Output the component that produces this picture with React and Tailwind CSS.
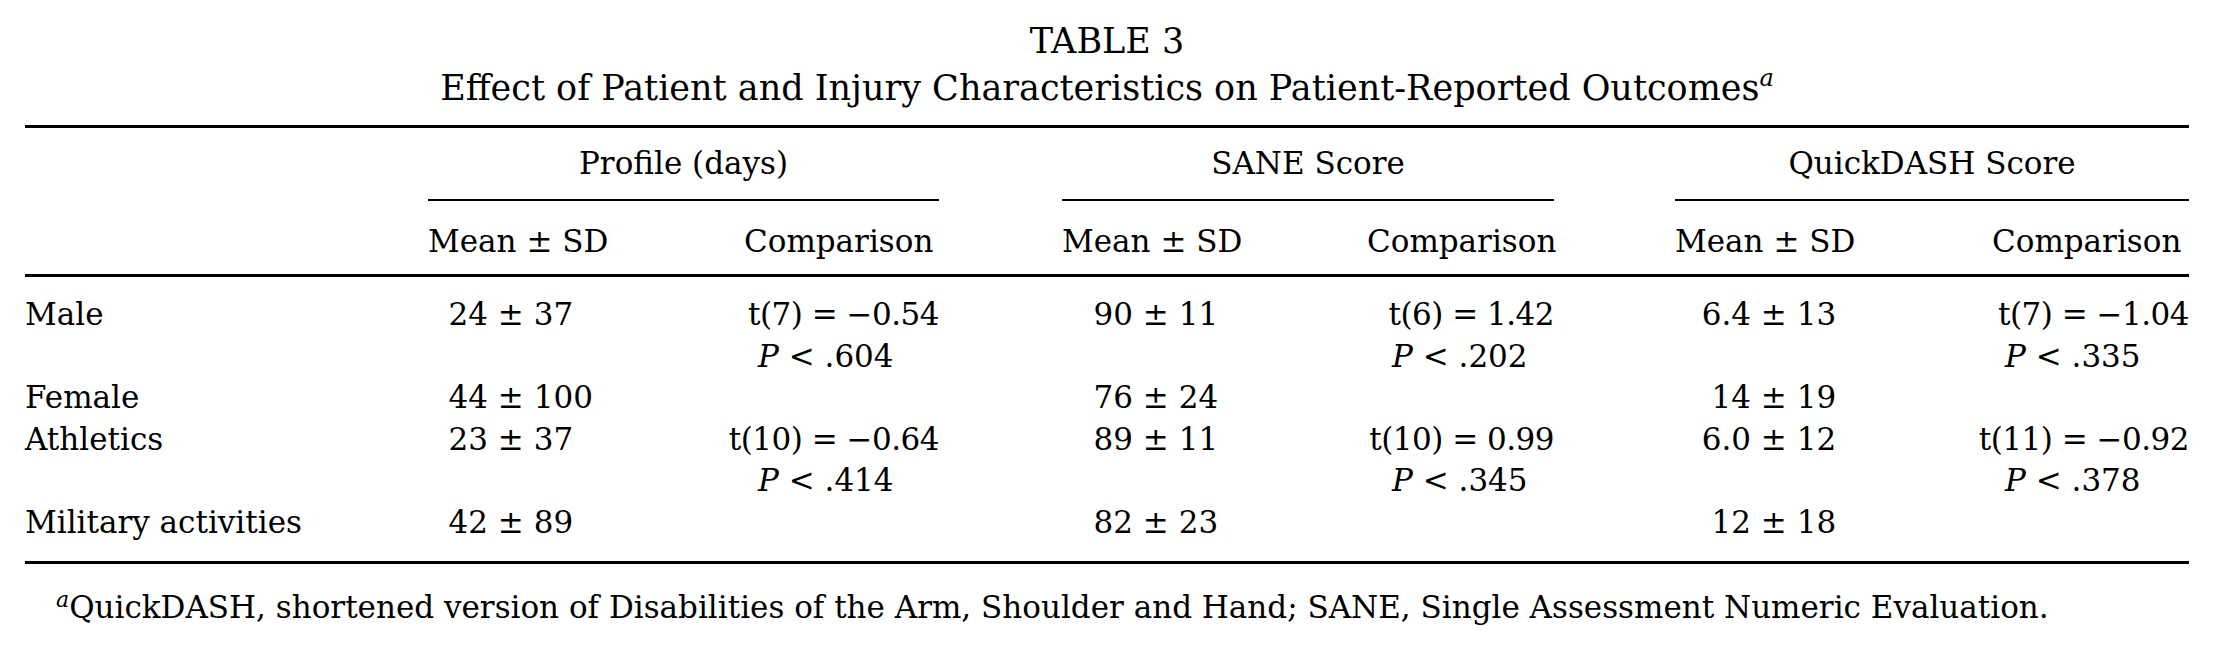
import React from "react";

const cols =
  "grid grid-cols-[403px_272px_239px_123px_268px_224px_121px_275px_239px]";

const rows = [
  {
    label: "Male",
    profile: ["24", "37"],
    profileCmp: ["t(7) = −0.54", ".604"],
    sane: ["90", "11"],
    saneCmp: ["t(6) = 1.42", ".202"],
    quick: ["6.4", "13"],
    quickCmp: ["t(7) = −1.04", ".335"],
  },
  {
    label: "Female",
    profile: ["44", "100"],
    sane: ["76", "24"],
    quick: ["14", "19"],
  },
  {
    label: "Athletics",
    profile: ["23", "37"],
    profileCmp: ["t(10) = −0.64", ".414"],
    sane: ["89", "11"],
    saneCmp: ["t(10) = 0.99", ".345"],
    quick: ["6.0", "12"],
    quickCmp: ["t(11) = −0.92", ".378"],
  },
  {
    label: "Military activities",
    profile: ["42", "89"],
    sane: ["82", "23"],
    quick: ["12", "18"],
  },
];

const MeanCell = ({ value, leftWidth }) => (
  <div className="whitespace-nowrap">
    <span className={`inline-block text-right ${leftWidth}`}>{value[0]}</span>
    <span> ± {value[1]}</span>
  </div>
);

const CmpCell = ({ value, pad }) =>
  value ? (
    <div className="whitespace-nowrap">
      <div className="text-right tracking-[-0.5px]">{value[0]}</div>
      <div className={pad}>
        <i>P</i> &lt; {value[1]}
      </div>
    </div>
  ) : (
    <div />
  );

const App = () => {
  return (
    <div className="w-[2214px] h-[653px] bg-white text-black font-['DejaVu_Serif',serif] text-[31px] leading-[41.6px] overflow-hidden">
      <div className="px-[25px] pt-[18px]">
        <div className="text-center text-[35px] leading-[47px]">
          <div>TABLE 3</div>
          <div>
            Effect of Patient and Injury Characteristics on Patient-Reported
            Outcomes
            <sup className="italic text-[24px] -top-[14px]">a</sup>
          </div>
        </div>

        <div className="mt-[13px] h-[3px] bg-black" />

        <div className={`${cols} pt-[14px] leading-[42px]`}>
          <div />
          <div className="col-span-2 text-center">Profile (days)</div>
          <div />
          <div className="col-span-2 text-center">SANE Score</div>
          <div />
          <div className="col-span-2 text-center">QuickDASH Score</div>
        </div>

        <div className={`${cols} mt-[15px]`}>
          <div />
          <div className="col-span-2 h-[2px] bg-black" />
          <div />
          <div className="col-span-2 h-[2px] bg-black" />
          <div />
          <div className="col-span-2 h-[2px] bg-black" />
        </div>

        <div className={`${cols} mt-[19px] leading-[42px]`}>
          <div />
          <div>Mean ± SD</div>
          <div className="pl-[44px]">Comparison</div>
          <div />
          <div>Mean ± SD</div>
          <div className="pl-[37px]">Comparison</div>
          <div />
          <div>Mean ± SD</div>
          <div className="pl-[42px]">Comparison</div>
        </div>

        <div className="mt-[12px] h-[3px] bg-black" />

        <div className="pt-[17px]">
          {rows.map((row) => (
            <div key={row.label} className={cols}>
              <div>{row.label}</div>
              <MeanCell value={row.profile} leftWidth="w-[60px]" />
              <CmpCell value={row.profileCmp} pad="pl-[58px]" />
              <div />
              <MeanCell value={row.sane} leftWidth="w-[71px]" />
              <CmpCell value={row.saneCmp} pad="pl-[62px]" />
              <div />
              <MeanCell value={row.quick} leftWidth="w-[76px]" />
              <CmpCell value={row.quickCmp} pad="pl-[55px]" />
            </div>
          ))}
        </div>

        <div className="mt-[17px] h-[3px] bg-black" />

        <div className="mt-[22px] pl-[31px] leading-[42px]">
          <sup className="italic text-[22px]">a</sup>
          QuickDASH, shortened version of Disabilities of the Arm, Shoulder and
          Hand; SANE, Single Assessment Numeric Evaluation.
        </div>
      </div>
    </div>
  );
};

export default App;
